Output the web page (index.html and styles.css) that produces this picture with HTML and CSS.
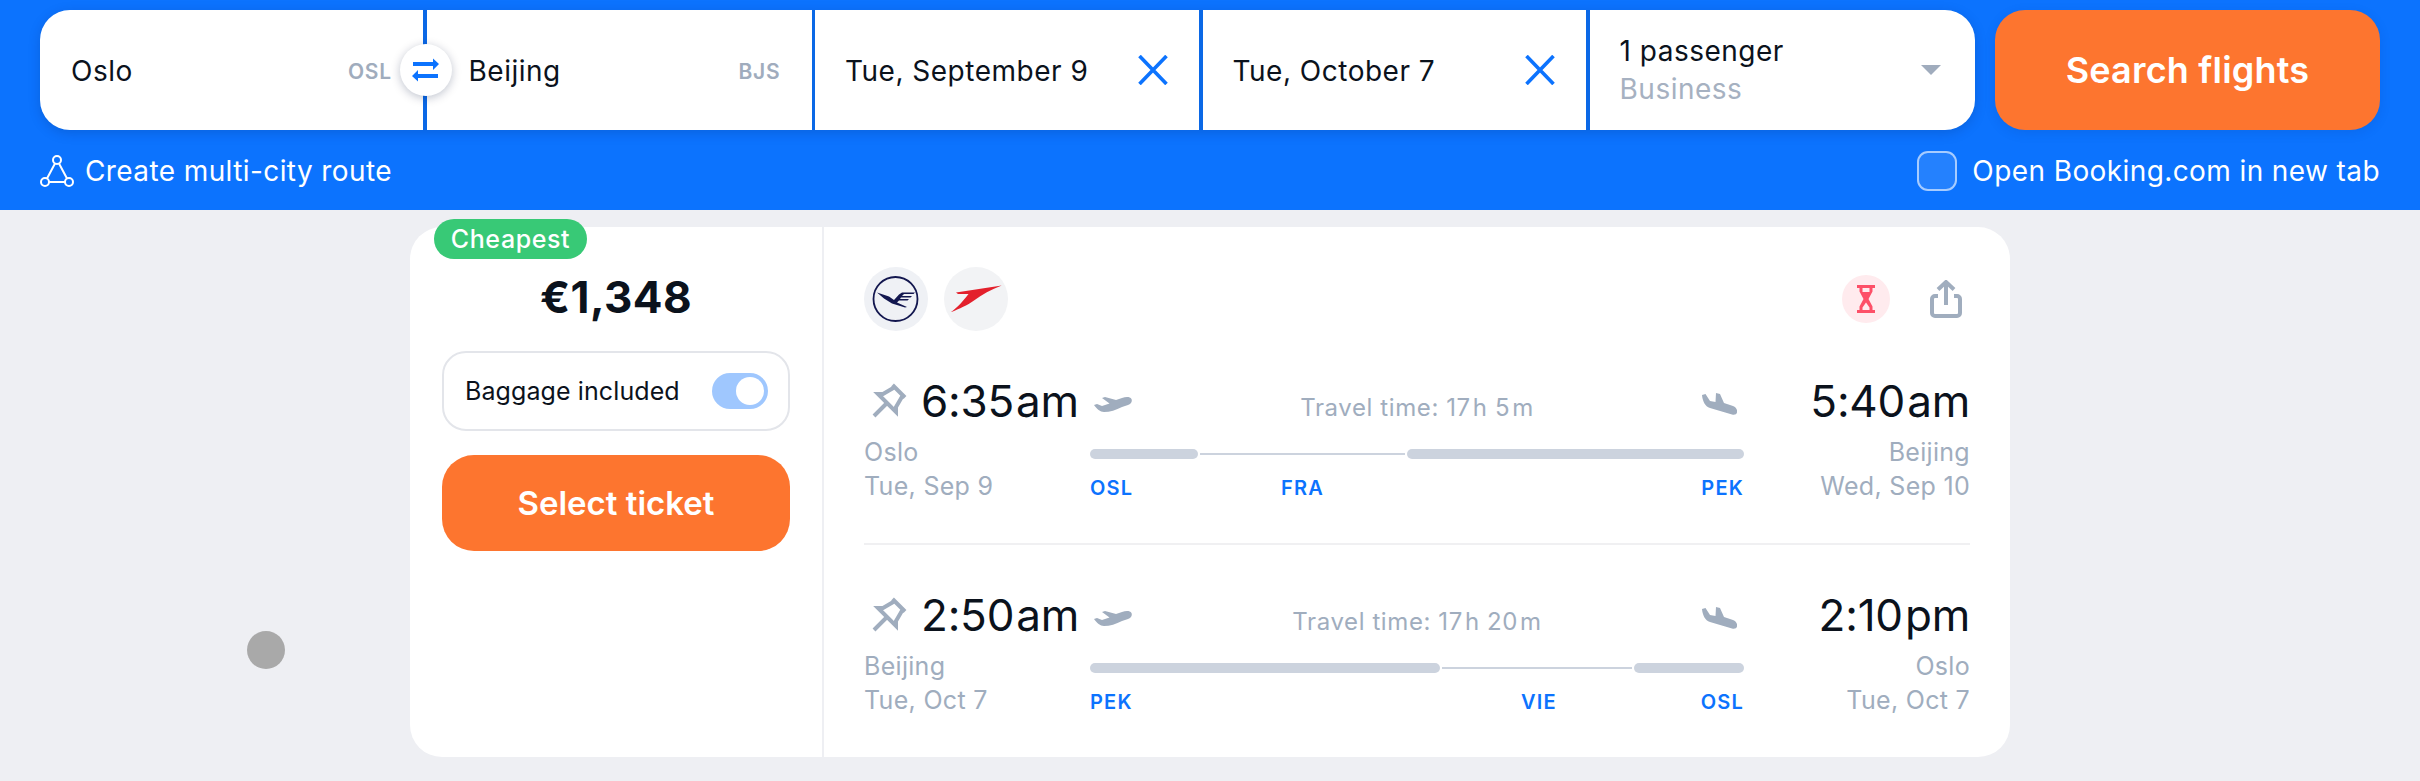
FILE: index.html
```html
<!DOCTYPE html>
<html lang="en">
<head>
<meta charset="utf-8">
<title>Flights</title>
<link rel="stylesheet" href="styles.css">
</head>
<body>
<header class="header">
  <div class="search-row">
    <div class="bar">
      <div class="cell cell-from"><span class="city">Oslo</span><span class="code">OSL</span></div>
      <div class="cell cell-to"><span class="city">Beijing</span><span class="code">BJS</span></div>
      <div class="cell cell-date"><span class="city">Tue, September 9</span>
        <svg class="x" viewBox="0 0 30 30"><path d="M1.500 1 28.500 29M28.500 1 1.500 29"/></svg></div>
      <div class="cell cell-date"><span class="city">Tue, October 7</span>
        <svg class="x" viewBox="0 0 30 30"><path d="M1.500 1 28.500 29M28.500 1 1.500 29"/></svg></div>
      <div class="cell cell-pax">
        <div class="pax"><span class="city">1 passenger</span><span class="pax-class">Business</span></div>
        <svg class="caret" viewBox="0 0 20 10"><path d="M0 0H20L10 10Z"/></svg>
      </div>
      <div class="swap">
        <svg viewBox="0 0 27 24"><path class="f" d="M1 4H21V.5L27 6 21 12V8H1Z"/><path class="f" d="M26 16H6V12L0 18 6 23.500V20H26Z"/></svg>
      </div>
    </div>
    <button class="search-btn">Search flights</button>
  </div>
  <div class="options">
    <a class="multi">
      <svg viewBox="0 0 34 32"><g fill="none" stroke="#fff" stroke-width="2"><circle cx="17" cy="5" r="4"/><circle cx="5" cy="27" r="4"/><circle cx="29" cy="27" r="4"/><path d="M15 8.500 7 23.500M19 8.500 27 23.500M9 27H25"/></g></svg>
      <span>Create multi-city route</span>
    </a>
    <label class="newtab"><span class="check"></span><span>Open Booking.com in new tab</span></label>
  </div>
</header>

<main class="main">
  <article class="card">
    <span class="badge">Cheapest</span>
    <section class="side">
      <div class="price">€1,348</div>
      <div class="baggage"><span>Baggage included</span><span class="toggle"><span class="knob"></span></span></div>
      <button class="select">Select ticket</button>
    </section>
    <section class="details">
      <div class="top">
        <div class="logos">
          <span class="logo">
            <svg viewBox="0 0 64 64"><circle cx="31.500" cy="32" r="22" fill="none" stroke="#13174f" stroke-width="1.800"/><path fill="#13174f" d="M13 25.500 25 29.500 30 33 35 27.500 38 25.500H51L49.500 27H40L38 29H48L46.500 30.500H37L36 32H45L43.500 33.500H35L33 35.500 43 40 41 40.500 28 36.500 20 31.500Z"/></svg>
          </span>
          <span class="logo logo-b">
            <svg viewBox="0 0 64 64"><path fill="#e3202c" d="M57.700 18.500 12 25.500 14 27H24.500C21 32 13 41 6.700 45.300 16 41.500 23 38.500 30 33.500 38 27.500 47 22.500 57.700 18.500Z"/></svg>
          </span>
        </div>
        <div class="actions">
          <span class="hourglass">
            <svg viewBox="0 0 18 28"><path d="M0 0H18V3H15.500V6.500L11.500 14 15.500 21.500V25H18V28H0V25H2.500V21.500L6.500 14 2.500 6.500V3H0ZM5.500 3V5 7H12.500V3ZM9 17.500 5.500 22.500V25H12.500V22.500Z" fill="#fd5068" fill-rule="evenodd"/></svg>
          </span>
          <svg class="share" viewBox="0 0 32 38"><path d="M16 25V2M8 9.500 16 2l8 7.500M8 16H5a3 3 0 0 0-3 3v14a3 3 0 0 0 3 3h22a3 3 0 0 0 3-3V19a3 3 0 0 0-3-3h-3"/></svg>
        </div>
      </div>

      <div class="leg leg-a">
        <div class="ends">
          <div class="end">
            <div class="time-row">
              <svg class="pin" viewBox="0 0 36 36"><path d="M21.500 2 34 14.500M24 4 12 11 7 11 25 29 25 24 32 12M15.500 20.500 3 33"/></svg>
              <span class="time">6:35<span class="ap">am</span></span>
            </div>
            <div class="place">Oslo</div><div class="place">Tue, Sep 9</div>
          </div>
          <div class="route">
            <div class="route-top">
              <svg class="plane" viewBox="0 0 38 17"><path d="M37.500 3C36 .5 32 .5 28 2L22 4 11 1 8 2 15.500 7.500 8 10 3 8 0 9C3 13 6 16 10 16 16 16 22 14 28 11L34 9C37 8 38.500 5.500 37.500 3Z"/></svg>
              <span class="travel">Travel time: 17<span class="u">h</span> 5<span class="u">m</span></span>
              <svg class="plane land" viewBox="0 0 35 22"><path d="M0 2 3.500 1 8 8 13.500 9 14 0 18 1 22 10 31 13C34 14 35.500 16.500 35 19.500 34.500 21.500 32.500 22 30 21.500L8 15C3 13.500 .5 8 0 2Z"/></svg>
            </div>
            <div class="track">
              <span class="seg seg-1a"></span><span class="line line-1"></span><span class="seg seg-1b"></span>
            </div>
            <div class="codes">
              <span class="iata">OSL</span><span class="iata iata-fra">FRA</span><span class="iata">PEK</span>
            </div>
          </div>
          <div class="end end-r">
            <span class="time time-end">5:40<span class="ap">am</span></span>
            <div class="place">Beijing</div><div class="place">Wed, Sep 10</div>
          </div>
        </div>
      </div>

      <div class="leg leg-b">
        <div class="ends">
          <div class="end">
            <div class="time-row">
              <svg class="pin" viewBox="0 0 36 36"><path d="M21.500 2 34 14.500M24 4 12 11 7 11 25 29 25 24 32 12M15.500 20.500 3 33"/></svg>
              <span class="time">2:50<span class="ap">am</span></span>
            </div>
            <div class="place">Beijing</div><div class="place">Tue, Oct 7</div>
          </div>
          <div class="route">
            <div class="route-top">
              <svg class="plane" viewBox="0 0 38 17"><path d="M37.500 3C36 .5 32 .5 28 2L22 4 11 1 8 2 15.500 7.500 8 10 3 8 0 9C3 13 6 16 10 16 16 16 22 14 28 11L34 9C37 8 38.500 5.500 37.500 3Z"/></svg>
              <span class="travel">Travel time: 17<span class="u">h</span> 20<span class="u">m</span></span>
              <svg class="plane land" viewBox="0 0 35 22"><path d="M0 2 3.500 1 8 8 13.500 9 14 0 18 1 22 10 31 13C34 14 35.500 16.500 35 19.500 34.500 21.500 32.500 22 30 21.500L8 15C3 13.500 .5 8 0 2Z"/></svg>
            </div>
            <div class="track">
              <span class="seg seg-2a"></span><span class="line line-2"></span><span class="seg seg-2b"></span>
            </div>
            <div class="codes">
              <span class="iata">PEK</span><span class="iata iata-vie">VIE</span><span class="iata">OSL</span>
            </div>
          </div>
          <div class="end end-r">
            <span class="time time-end">2:10<span class="ap">pm</span></span>
            <div class="place">Oslo</div><div class="place">Tue, Oct 7</div>
          </div>
        </div>
      </div>
    </section>
  </article>
</main>
<span class="touch-dot"></span>
</body>
</html>
```
FILE: styles.css
```css
* { box-sizing: border-box; }
html, body { margin: 0; height: 100%; }
body {
  position: relative;
  height: 781px;
  overflow: hidden;
  background: #eeeff3;
  font-family: Inter, "Liberation Sans", sans-serif;
  color: #0b121c;
}
.header { height: 210px; background: #0c73fe; padding: 10px 40px 0; }
.search-row { display: flex; gap: 20px; height: 120px; }
.bar {
  position: relative;
  flex: 1;
  display: grid;
  grid-template-columns: 383px 385px 384px 383.500px 1fr;
  column-gap: 3.500px;
  background: #0b68e6;
  border-radius: 30px;
  box-shadow: 0 3px 12px rgba(0, 40, 110, .22);
}
.cell { background: #fff; display: flex; align-items: center; justify-content: space-between; padding: 2px 31px 0 30px; }
.cell-from { border-radius: 30px 0 0 30px; padding-left: 31px; }
.cell-to { padding-left: 42px; }
.cell-pax { border-radius: 0 30px 30px 0; padding: 0 34px 0 30px; }
.city { font-size: 28px; line-height: 38px; letter-spacing: .5px; }
.code { font-size: 21px; font-weight: 600; color: #a0acbd; letter-spacing: .8px; }
.x { width: 30px; height: 30px; margin-top: -2px; flex: none; }
.x path { fill: none; stroke: #0c73fe; stroke-width: 3.600; }
.pax { display: flex; flex-direction: column; }
.pax-class { font-size: 28px; line-height: 38px; color: #a6b1c1; letter-spacing: .5px; }
.caret { width: 20px; height: 10px; fill: #a0acbd; }
.swap {
  position: absolute; left: 359.500px; top: 34px;
  width: 52px; height: 52px; border-radius: 50%;
  background: #fff; box-shadow: 0 2px 10px rgba(0, 20, 60, .25);
  display: flex; align-items: center; justify-content: center;
}
.swap svg { width: 27px; height: 24px; }
.swap .f { fill: #0c73fe; }
.search-btn {
  width: 385px; border: 0; border-radius: 30px; background: #fd752f;
  color: #fff; font: 600 36px Inter, "Liberation Sans", sans-serif; letter-spacing: .2px;
  box-shadow: 0 3px 12px rgba(0, 40, 110, .12);
}
.options { display: flex; justify-content: space-between; align-items: center; height: 80px; padding-top: 1px; color: #fff; font-size: 28px; letter-spacing: .4px; }
.multi { display: flex; align-items: center; gap: 11px; }
.multi svg { width: 34px; height: 32px; }
.newtab { display: flex; align-items: center; gap: 15px; }
.check { width: 40px; height: 40px; border-radius: 11px; border: 2px solid rgba(255,255,255,.6); background: rgba(255,255,255,.1); }

.main { padding-top: 17px; }
.card {
  position: relative;
  width: 1600px; height: 530px; margin: 0 auto;
  background: #fff; border-radius: 32px;
  display: flex;
}
.badge {
  position: absolute; left: 24px; top: -8px;
  height: 40px; width: 153px; border-radius: 20px;
  background: #38c976; color: #fff;
  font-size: 25px; font-weight: 500; line-height: 40px; text-align: center; letter-spacing: .6px;
}
.side { width: 414px; border-right: 2px solid #eeeff3; padding: 0 32px; display: flex; flex-direction: column; }
.price { text-align: center; font-size: 44px; font-weight: 700; line-height: 54px; margin-top: 43px; letter-spacing: .4px; }
.baggage {
  margin-top: 27px; height: 80px;
  border: 2px solid #e3e5ea; border-radius: 24px;
  display: flex; align-items: center; justify-content: space-between;
  padding: 0 20px 0 21px; font-size: 25px; letter-spacing: .1px;
}
.toggle { width: 56px; height: 36px; border-radius: 18px; background: #9fc7fe; padding: 4px; display: flex; justify-content: flex-end; }
.knob { width: 28px; height: 28px; border-radius: 50%; background: #fff; }
.select {
  margin-top: 24px; height: 96px; border: 0; border-radius: 32px;
  background: #fd752f; color: #fff;
  font: 600 33px Inter, "Liberation Sans", sans-serif;
}
.details { flex: 1; padding: 40px 40px 0; }
.top { display: flex; justify-content: space-between; align-items: center; height: 64px; }
.logos { display: flex; gap: 16px; }
.logo { width: 64px; height: 64px; border-radius: 50%; background: #eff1f5; }
.logo-b { background: #f2f3f5; }
.logo svg { width: 64px; height: 64px; display: block; }
.actions { display: flex; align-items: center; gap: 40px; padding-right: 8px; }
.hourglass { width: 48px; height: 48px; border-radius: 50%; background: #ffebee; display: flex; align-items: center; justify-content: center; }
.hourglass svg { width: 18px; height: 28px; }
.share { width: 32px; height: 38px; fill: none; stroke: #a0adbe; stroke-width: 4; }

.leg-a { margin-top: 44px; height: 170px; border-bottom: 2px solid #f0f0f2; }
.leg-b { margin-top: 44px; }
.ends { display: flex; }
.end { width: 226px; flex: none; }
.end-r { display: flex; flex-direction: column; align-items: flex-end; }
.time-row { display: flex; align-items: center; gap: 14px; height: 52px; margin-bottom: 8px; }
.time { font-size: 44px; line-height: 52px; font-weight: 400; letter-spacing: -.2px; }
.time-end { margin-bottom: 8px; }
.ap { margin-left: 2px; }
.pin { width: 36px; height: 36px; margin-left: 7px; fill: none; stroke: #a0adbe; stroke-width: 4; }
.place { font-size: 25px; line-height: 34px; color: #a0adbe; letter-spacing: .3px; }
.route { flex: 1; }
.route-top { display: flex; justify-content: space-between; align-items: center; height: 52px; padding: 6px 7px 0 4px; }
.plane { width: 38px; height: 17px; fill: #a0adbe; }
.plane.land { width: 35px; height: 22px; }
.travel { font-size: 24px; color: #a0adbe; letter-spacing: .6px; margin-top: 6px; }
.u { margin-left: 2px; }
.track { display: flex; align-items: center; height: 10px; margin-top: 22px; gap: 2px; }
.seg { height: 10px; border-radius: 5px; background: #ccd3de; }
.line { height: 2px; background: #ccd3de; }
.seg-1a { width: 108px; } .line-1 { width: 205px; } .seg-1b { flex: 1; }
.seg-2a { width: 350px; } .line-2 { width: 190px; } .seg-2b { flex: 1; }
.codes { position: relative; display: flex; justify-content: space-between; margin-top: 15px; font-size: 20px; line-height: 28px; }
.iata { font-weight: 600; color: #0c73fe; letter-spacing: 1.200px; }
.iata-fra { position: absolute; left: 191px; }
.iata-vie { position: absolute; left: 431px; }
.touch-dot { position: absolute; left: 247px; top: 631px; width: 38px; height: 38px; border-radius: 50%; background: #a9a9a9; }
```
